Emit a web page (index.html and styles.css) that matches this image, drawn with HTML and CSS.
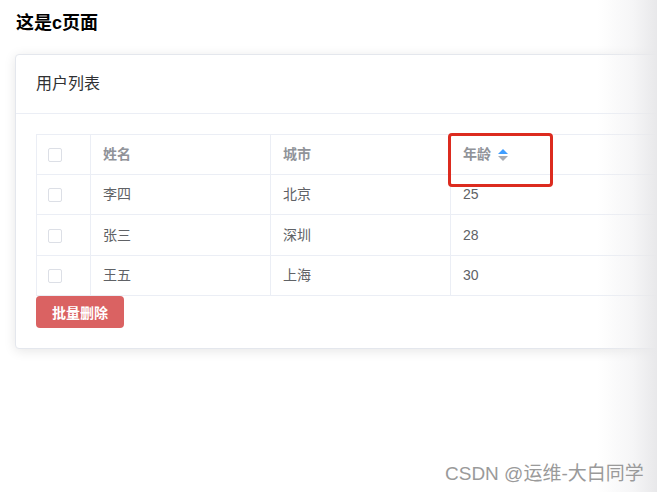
FILE: index.html
```html
<!DOCTYPE html>
<html lang="zh">
<head>
<meta charset="utf-8">
<link rel="stylesheet" href="styles.css">
</head>
<body>
<div class="page">
  <h3 class="title">这是c页面</h3>
  <div class="card">
    <div class="card-header">用户列表</div>
    <div class="card-body">
      <div class="table-wrap">
        <table class="table">
          <colgroup>
            <col class="c-sel"><col class="c-name"><col class="c-city"><col class="c-age">
          </colgroup>
          <thead>
            <tr>
              <th><span class="checkbox"></span></th>
              <th>姓名</th>
              <th>城市</th>
              <th><span class="sortable">年龄<span class="caret"><i class="up"></i><i class="down"></i></span></span></th>
            </tr>
          </thead>
          <tbody>
            <tr><td><span class="checkbox"></span></td><td>李四</td><td>北京</td><td>25</td></tr>
            <tr class="tall"><td><span class="checkbox"></span></td><td>张三</td><td>深圳</td><td>28</td></tr>
            <tr><td><span class="checkbox"></span></td><td>王五</td><td>上海</td><td>30</td></tr>
          </tbody>
        </table>
        <div class="highlight"></div>
      </div>
      <button class="btn-danger">批量删除</button>
    </div>
  </div>
</div>
<div class="edge-shade"></div>
<div class="watermark">CSDN @运维-大白同学</div>
</body>
</html>
```
FILE: styles.css
```css
html, body {
  margin: 0;
  padding: 0;
  background: #ffffff;
  overflow: hidden;
  width: 657px;
  height: 492px;
}
body {
  font-family: "Helvetica Neue", "Liberation Sans", "Noto Sans CJK SC", sans-serif;
  color: #303133;
  position: relative;
}
.page {
  padding: 13px 0 30px 15px;
  width: 642px;
  overflow: hidden;
}
.title {
  margin: 0 0 20px 1px;
  font-size: 18px;
  line-height: 21px;
  font-weight: bold;
  color: #000000;
}
.card {
  width: 820px;
  border: 1px solid #e4e7ed;
  border-radius: 4px;
  background: #ffffff;
  box-shadow: 0 2px 12px 0 rgba(0, 0, 0, 0.1);
}
.card-header {
  padding: 18px 20px;
  font-size: 16px;
  line-height: 22px;
  color: #303133;
  border-bottom: 1px solid #ebeef5;
}
.card-body {
  padding: 20px;
}
.table-wrap {
  position: relative;
}
.table {
  border-collapse: collapse;
  width: 778px;
  table-layout: fixed;
  font-size: 14px;
  color: #606266;
  border: 1px solid #ebeef5;
}
.c-sel { width: 54px; }
.c-name { width: 180px; }
.c-city { width: 180px; }
.table th, .table td {
  border: 1px solid #ebeef5;
  height: 39px;
  padding: 0 12px;
  text-align: left;
  line-height: 23px;
}
.table .tall td {
  height: 40px;
}
.table th {
  color: #909399;
  font-weight: bold;
}
.table th:first-child, .table td:first-child {
  padding: 0 0 0 11px;
}
.checkbox {
  display: inline-block;
  width: 12px;
  height: 12px;
  border: 1px solid #dcdfe6;
  border-radius: 2px;
  background: #ffffff;
  vertical-align: middle;
}
.sortable {
  display: inline-flex;
  align-items: center;
}
.caret {
  display: inline-flex;
  flex-direction: column;
  margin-left: 7px;
  gap: 2px;
}
.caret i {
  display: block;
  width: 0;
  height: 0;
  border-left: 5px solid transparent;
  border-right: 5px solid transparent;
}
.caret .up {
  border-bottom: 5px solid #409eff;
}
.caret .down {
  border-top: 5px solid #a8abb2;
}
.highlight {
  position: absolute;
  left: 412px;
  top: -1px;
  width: 99px;
  height: 48px;
  border: 3px solid #dc2b1f;
  border-radius: 4px;
}
.btn-danger {
  display: block;
  margin-top: 0;
  width: 88px;
  height: 32px;
  border: none;
  border-radius: 4px;
  background: #da6262;
  color: #ffffff;
  font-family: "Helvetica Neue", "Liberation Sans", "Noto Sans CJK SC", sans-serif;
  font-size: 14px;
  font-weight: bold;
  padding: 0;
}
.edge-shade {
  position: absolute;
  top: 0;
  right: 0;
  width: 60px;
  height: 492px;
  background: linear-gradient(to right, rgba(236, 236, 238, 0) 0%, rgba(236, 236, 238, 0.5) 60%, rgba(232, 232, 234, 1) 100%);
  pointer-events: none;
}
.watermark {
  position: absolute;
  left: 445px;
  top: 463px;
  font-size: 19px;
  line-height: 22px;
  color: #9a9a9a;
  font-family: "Liberation Sans", "Noto Sans CJK SC", sans-serif;
}
```
